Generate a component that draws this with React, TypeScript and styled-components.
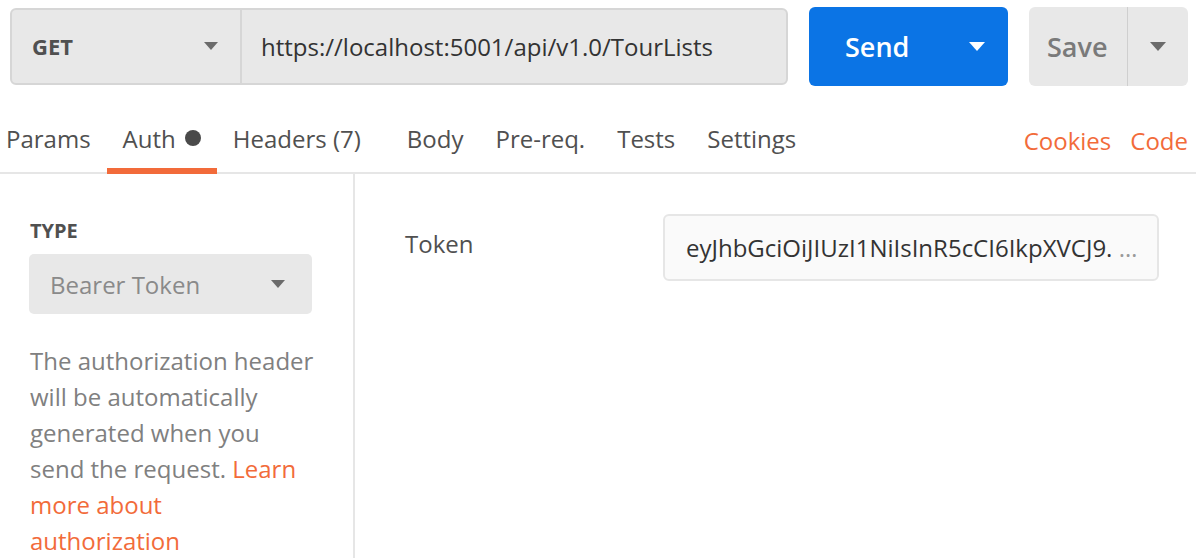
import React from "react";
import styled, { createGlobalStyle } from "styled-components";

const Global = createGlobalStyle`
  html, body { margin: 0; padding: 0; background: #fff; }
  body { font-family: "Open Sans", "Noto Sans", sans-serif; width: 1196px; height: 558px; overflow: hidden; }
  * { box-sizing: border-box; }
`;

const Page = styled.div`
  width: 1196px;
  height: 558px;
  display: flex;
  flex-direction: column;
  overflow: hidden;
`;

const TopBar = styled.div`
  flex-shrink: 0;
  display: flex;
  align-items: center;
  padding: 6px 8px 0 10px;
  height: 86px;
`;

const UrlGroup = styled.div`
  display: flex;
  width: 778px;
  height: 77px;
  background: #e8e8e8;
  border: 2px solid #d6d6d6;
  border-radius: 6px;
`;

const Method = styled.div`
  width: 230px;
  display: flex;
  align-items: center;
  justify-content: space-between;
  padding: 0 22px 0 20px;
  border-right: 2px solid #d6d6d6;
  font-size: 22px;
  font-weight: 700;
  color: #505050;
`;

const UrlText = styled.div`
  display: flex;
  align-items: center;
  padding-left: 19px;
  font-size: 24px;
  color: #333;
`;

const Caret = styled.span<{ $color?: string; $w?: number }>`
  display: inline-block;
  width: 0;
  height: 0;
  border-left: ${(p) => (p.$w ?? 14) / 2}px solid transparent;
  border-right: ${(p) => (p.$w ?? 14) / 2}px solid transparent;
  border-top: ${(p) => ((p.$w ?? 14) * 0.58).toFixed(1)}px solid ${(p) => p.$color ?? "#6b6b6b"};
`;

const SendButton = styled.div`
  margin-left: 21px;
  width: 199px;
  height: 79px;
  background: #0b74e5;
  border-radius: 6px;
  display: flex;
  align-items: center;
  justify-content: space-between;
  padding: 0 23px 0 36px;
  color: #fff;
  font-size: 27px;
  font-weight: 600;
`;

const SaveButton = styled.div`
  margin-left: 21px;
  width: 159px;
  height: 79px;
  background: #e8e8e8;
  border-radius: 6px;
  display: flex;
  color: #7a7a7a;
  font-size: 27px;
  font-weight: 600;
`;

const SaveLabel = styled.div`
  width: 99px;
  display: flex;
  align-items: center;
  padding-left: 18px;
  border-right: 1px solid #cfcfcf;
`;

const SaveArrow = styled.div`
  flex: 1;
  display: flex;
  align-items: center;
  justify-content: center;
`;

const TabBar = styled.div`
  flex-shrink: 0;
  margin-top: 14px;
  height: 74px;
  display: flex;
  align-items: stretch;
  border-bottom: 2px solid #e6e6e6;
`;

const Tab = styled.div<{ $active?: boolean; $first?: boolean; $extra?: number }>`
  display: flex;
  align-items: center;
  gap: 9px;
  padding: 0 16px 0 ${(p) => (p.$first ? 6 : 16)}px;
  margin-right: ${(p) => p.$extra ?? 0}px;
  font-size: 24px;
  color: #505050;
  border-bottom: 6px solid ${(p) => (p.$active ? "#f26b3a" : "transparent")};
  margin-bottom: -2px;
  padding-top: 8px;
`;

const Dot = styled.span`
  width: 16px;
  height: 16px;
  border-radius: 50%;
  background: #4a4a4a;
`;

const Spacer = styled.div`
  flex: 1;
`;

const LinkTab = styled.div<{ $pr?: number }>`
  display: flex;
  align-items: center;
  padding: 8px ${(p) => p.$pr ?? 0}px 0 0;
  margin-left: 19px;
  font-size: 24px;
  color: #f26b3a;
`;

const Body = styled.div`
  flex: 1;
  min-height: 0;
  display: flex;
`;

const LeftPanel = styled.div`
  width: 355px;
  border-right: 2px solid #e6e6e6;
  padding: 44px 0 0 29px;
`;

const TypeLabel = styled.div`
  font-size: 20px;
  font-weight: 700;
  color: #505050;
  padding-left: 1px;
  line-height: 26px;
`;

const Select = styled.div`
  margin-top: 10px;
  width: 283px;
  height: 60px;
  background: #e8e8e8;
  border-radius: 5px;
  display: flex;
  align-items: center;
  justify-content: space-between;
  padding: 0 27px 0 21px;
  font-size: 24px;
  color: #8a8a8a;
`;

const Description = styled.p`
  margin: 29px 0 0 1px;
  width: 284px;
  font-size: 24px;
  line-height: 36px;
  color: #808080;
`;

const Link = styled.span`
  color: #f26b3a;
`;

const RightPanel = styled.div`
  flex: 1;
  display: flex;
  align-items: flex-start;
  padding: 40px 0 0 50px;
`;

const FieldLabel = styled.div`
  width: 258px;
  height: 59px;
  display: flex;
  align-items: center;
  font-size: 24px;
  color: #505050;
`;

const TokenInput = styled.div`
  width: 496px;
  height: 67px;
  background: #fafafa;
  border: 2px solid #e6e6e6;
  border-radius: 6px;
  display: flex;
  align-items: center;
  padding: 0 0 0 21px;
  font-size: 24px;
  color: #333;
  white-space: pre;
  overflow: hidden;
`;

const Ellipsis = styled.span`
  color: #9a9a9a;
`;

export default function App() {
  return (
    <Page>
      <Global />
      <TopBar>
        <UrlGroup>
          <Method>
            GET
            <Caret $color="#6b6b6b" $w={14} />
          </Method>
          <UrlText>https://localhost:5001/api/v1.0/TourLists</UrlText>
        </UrlGroup>
        <SendButton>
          Send
          <Caret $color="#fff" $w={16} />
        </SendButton>
        <SaveButton>
          <SaveLabel>Save</SaveLabel>
          <SaveArrow>
            <Caret $color="#6b6b6b" $w={16} />
          </SaveArrow>
        </SaveButton>
      </TopBar>
      <TabBar>
        <Tab $first>Params</Tab>
        <Tab $active>
          Auth <Dot />
        </Tab>
        <Tab $extra={14}>Headers (7)</Tab>
        <Tab>Body</Tab>
        <Tab>Pre-req.</Tab>
        <Tab>Tests</Tab>
        <Tab>Settings</Tab>
        <Spacer />
        <LinkTab>Cookies</LinkTab>
        <LinkTab $pr={8}>Code</LinkTab>
      </TabBar>
      <Body>
        <LeftPanel>
          <TypeLabel>TYPE</TypeLabel>
          <Select>
            Bearer Token
            <Caret $color="#6b6b6b" $w={14} />
          </Select>
          <Description>
            The authorization header will be automatically generated when you send the request.{" "}
            <Link>Learn more about authorization</Link>
          </Description>
        </LeftPanel>
        <RightPanel>
          <FieldLabel>Token</FieldLabel>
          <TokenInput>
            eyJhbGciOiJIUzI1NiIsInR5cCI6IkpXVCJ9. <Ellipsis>…</Ellipsis>
          </TokenInput>
        </RightPanel>
      </Body>
    </Page>
  );
}
